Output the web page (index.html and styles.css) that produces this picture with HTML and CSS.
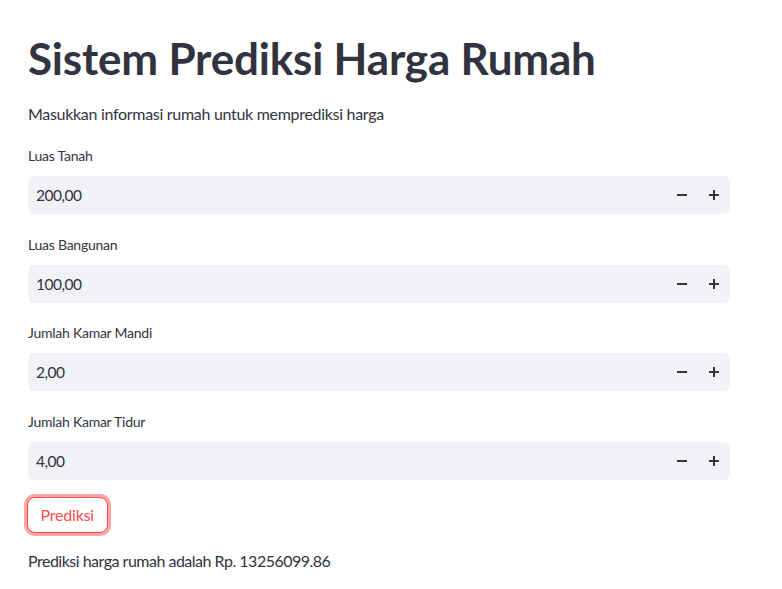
FILE: index.html
```html
<!DOCTYPE html>
<html lang="id">
<head>
<meta charset="utf-8">
<title>Sistem Prediksi Harga Rumah</title>
<link rel="stylesheet" href="styles.css">
</head>
<body>
<main class="main">
  <h1 class="title">Sistem Prediksi Harga Rumah</h1>
  <p class="intro">Masukkan informasi rumah untuk memprediksi harga</p>

  <div class="field">
    <label class="label">Luas Tanah</label>
    <div class="number">
      <span class="value">200,00</span>
      <button class="step" aria-label="minus"><svg width="10" height="10" viewBox="0 0 10 10"><rect x="0" y="4" width="10" height="2" fill="#31333f"/></svg></button>
      <button class="step" aria-label="plus"><svg width="10" height="10" viewBox="0 0 10 10"><rect x="0" y="4" width="10" height="2" fill="#31333f"/><rect x="4" y="0" width="2" height="10" fill="#31333f"/></svg></button>
    </div>
  </div>

  <div class="field">
    <label class="label">Luas Bangunan</label>
    <div class="number">
      <span class="value">100,00</span>
      <button class="step" aria-label="minus"><svg width="10" height="10" viewBox="0 0 10 10"><rect x="0" y="4" width="10" height="2" fill="#31333f"/></svg></button>
      <button class="step" aria-label="plus"><svg width="10" height="10" viewBox="0 0 10 10"><rect x="0" y="4" width="10" height="2" fill="#31333f"/><rect x="4" y="0" width="2" height="10" fill="#31333f"/></svg></button>
    </div>
  </div>

  <div class="field">
    <label class="label">Jumlah Kamar Mandi</label>
    <div class="number">
      <span class="value">2,00</span>
      <button class="step" aria-label="minus"><svg width="10" height="10" viewBox="0 0 10 10"><rect x="0" y="4" width="10" height="2" fill="#31333f"/></svg></button>
      <button class="step" aria-label="plus"><svg width="10" height="10" viewBox="0 0 10 10"><rect x="0" y="4" width="10" height="2" fill="#31333f"/><rect x="4" y="0" width="2" height="10" fill="#31333f"/></svg></button>
    </div>
  </div>

  <div class="field">
    <label class="label">Jumlah Kamar Tidur</label>
    <div class="number">
      <span class="value">4,00</span>
      <button class="step" aria-label="minus"><svg width="10" height="10" viewBox="0 0 10 10"><rect x="0" y="4" width="10" height="2" fill="#31333f"/></svg></button>
      <button class="step" aria-label="plus"><svg width="10" height="10" viewBox="0 0 10 10"><rect x="0" y="4" width="10" height="2" fill="#31333f"/><rect x="4" y="0" width="2" height="10" fill="#31333f"/></svg></button>
    </div>
  </div>

  <button class="predict">Prediksi</button>
  <p class="result">Prediksi harga rumah adalah Rp. 13256099.86</p>
</main>
</body>
</html>
```

FILE: styles.css
```css
* { box-sizing: border-box; }
html, body { margin: 0; padding: 0; background: #ffffff; }
body {
  font-family: "Lato", "Liberation Sans", sans-serif;
  color: #31333f;
}
.main {
  display: flex;
  flex-direction: column;
  padding: 32px 52px 20px 28px;
}
.title {
  margin: 0;
  font-size: 44px;
  font-weight: 700;
  line-height: 52px;
  letter-spacing: -0.2px;
}
.intro {
  margin: 17px 0 0;
  font-size: 16px;
  line-height: 26px;
  letter-spacing: -0.3px;
}
.field {
  display: flex;
  flex-direction: column;
  gap: 10px;
  margin-top: 18px;
}
.field + .field { margin-top: 19.5px; }
.label {
  font-size: 14px;
  line-height: 21px;
  letter-spacing: -0.25px;
}
.number {
  display: flex;
  align-items: center;
  height: 38px;
  background: #f0f2f6;
  border-radius: 6px;
}
.value {
  flex: 1;
  padding-left: 8px;
  font-size: 15.5px;
  letter-spacing: -0.5px;
}
.step {
  width: 32px;
  height: 38px;
  border: 0;
  background: transparent;
  display: flex;
  align-items: center;
  justify-content: center;
  padding: 0;
}
.predict {
  align-self: flex-start;
  margin-top: 17px;
  margin-left: -1px;
  height: 36px;
  padding: 0 12.5px;
  font-family: inherit;
  font-size: 16px;
  letter-spacing: -0.2px;
  color: #ff4b4b;
  background: #ffffff;
  border: 1px solid #ff4b4b;
  border-radius: 8px;
  box-shadow: 0 0 0 3px rgba(255, 75, 75, 0.5);
}
.result {
  margin: 15px 0 0;
  font-size: 16px;
  line-height: 26px;
  letter-spacing: -0.5px;
}
```
